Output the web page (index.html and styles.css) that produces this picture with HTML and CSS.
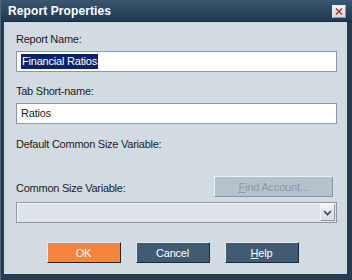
FILE: index.html
```
<!DOCTYPE html>
<html lang="en">
<head>
    <meta charset="UTF-8">
    <title>Report Properties</title>
    <link rel="stylesheet" href="styles.css">
</head>
<body>
    <div class="dialog">
        <div class="title-bar">
            <span class="title">Report Properties</span>
            <button class="close-btn" title="Close">
                <svg width="8" height="7" viewBox="0 0 8 7">
                    <path d="M1 0.5 L7 6.5 M7 0.5 L1 6.5" stroke="#b03a3a" stroke-width="1.6" fill="none"/>
                </svg>
            </button>
        </div>

        <div class="dialog-body">
            <label class="field-label">Report Name:</label>
            <div class="text-field"><span class="selected">Financial Ratios</span></div>

            <label class="field-label">Tab Short-name:</label>
            <div class="text-field">Ratios</div>

            <label class="field-label">Default Common Size Variable:</label>

            <div class="variable-row">
                <label class="field-label">Common Size Variable:</label>
                <button class="btn btn-disabled"><u>F</u>ind Account...</button>
            </div>

            <div class="select-field">
                <span class="select-arrow">
                    <svg width="9" height="6" viewBox="0 0 9 6">
                        <path d="M1 1 L4.5 4.5 L8 1" stroke="#3a4650" stroke-width="1.6" fill="none"/>
                    </svg>
                </span>
            </div>

            <div class="button-row">
                <button class="btn btn-primary">OK</button>
                <button class="btn">Cancel</button>
                <button class="btn"><u>H</u>elp</button>
            </div>
        </div>
    </div>
</body>
</html>
```

FILE: styles.css
```
body {
    margin: 0;
    padding: 0;
    font-family: 'Liberation Sans', Arial, sans-serif;
    font-size: 11px;
    background: #263b4f;
}

.dialog {
    width: 352px;
    height: 280px;
    display: flex;
    flex-direction: column;
    background: #263b4f;
    box-sizing: border-box;
    border-left: 1px solid #51667a;
}

.title-bar {
    height: 22px;
    display: flex;
    align-items: center;
    justify-content: space-between;
    padding: 0 6px 0 7px;
    background: linear-gradient(#3b5670, #2a445b 60%, #213850);
    border-bottom: 1px solid #1a2b3a;
    box-sizing: border-box;
}

.title {
    color: #fff;
    font-weight: bold;
    font-size: 12px;
    letter-spacing: 0.1px;
}

.close-btn {
    width: 14px;
    height: 13px;
    padding: 0;
    margin-top: 1px;
    display: flex;
    align-items: center;
    justify-content: center;
    background: linear-gradient(#f2f2f2, #d4d8dc);
    border: 1px solid #e8ecf0;
    border-right-color: #8a96a2;
    border-bottom-color: #8a96a2;
}

.dialog-body {
    flex: 1;
    margin: 0 5px 6px 3px;
    padding: 11px 10px 0 12px;
    background: #d3dbe2;
    display: flex;
    flex-direction: column;
}

.field-label {
    display: block;
    height: 13px;
    line-height: 13px;
    color: #1c1c1c;
    letter-spacing: -0.25px;
}

.text-field {
    height: 21px;
    margin: 5px 0 13px;
    padding: 0 4px;
    line-height: 19px;
    box-sizing: border-box;
    background: #fff;
    border: 1px solid #8a99a5;
    color: #1c1c1c;
    letter-spacing: -0.2px;
}

.text-field:nth-of-type(2) {
    margin-bottom: 14px;
}

.selected {
    background: #0a246a;
    color: #fff;
    padding: 1px 1px 2px;
}

.variable-row {
    display: flex;
    justify-content: space-between;
    align-items: flex-end;
    margin-top: 25px;
    padding-right: 4px;
}

.variable-row .field-label {
    margin-bottom: 2px;
}

.select-field {
    height: 21px;
    margin-top: 5px;
    display: flex;
    justify-content: flex-end;
    align-items: center;
    padding-right: 1px;
    box-sizing: border-box;
    background: #dde3e8;
    border: 1px solid #8a99a5;
    box-shadow: inset 1px 1px 0 #f4f6f8;
}

.select-arrow {
    width: 15px;
    height: 17px;
    display: flex;
    align-items: center;
    justify-content: center;
    box-sizing: border-box;
    background: linear-gradient(#eef1f3, #d6dce1);
    border: 1px solid #f6f8fa;
    border-right-color: #8d9aa5;
    border-bottom-color: #8d9aa5;
}

.button-row {
    display: flex;
    justify-content: center;
    gap: 15px;
    margin: 19px 0 0 -8px;
}

.btn {
    width: 74px;
    height: 21px;
    padding: 0;
    font-family: 'Liberation Sans', Arial, sans-serif;
    font-size: 11px;
    color: #fff;
    background: #405b72;
    border: 1px solid #e4eaee;
    border-right-color: #1b2a36;
    border-bottom-color: #1b2a36;
    letter-spacing: -0.2px;
}

.btn-primary {
    background: #f4853a;
}

.btn-disabled {
    width: 119px;
    background: #b6c2cb;
    color: #8798a6;
    border-color: #eef2f4 #8796a2 #8796a2 #eef2f4;
}
```
